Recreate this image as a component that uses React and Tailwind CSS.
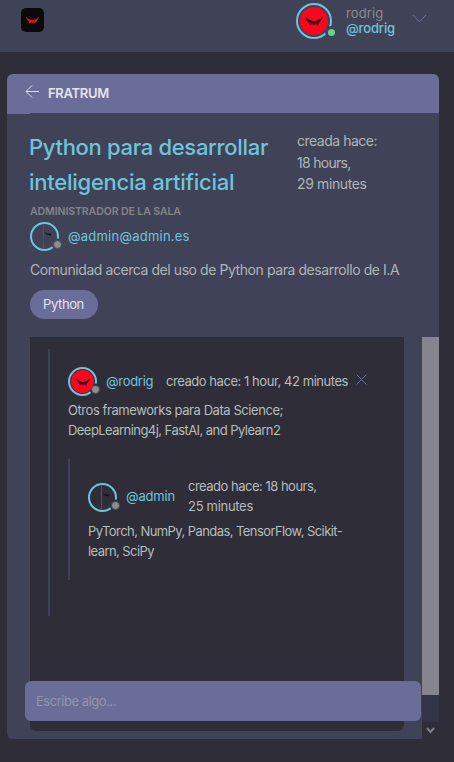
import { useId } from 'react';

const FONT = "font-['Inter','Open_Sans',sans-serif]";

function Wings({ className, dark }) {
  return (
    <svg viewBox="0 0 52 28" className={className}>
      <path
        d="M0 0 Q10 13 26 15 Q42 13 52 0 Q49 14 42 18 L38 28 L31 23 L26 27 L21 23 L14 28 L10 18 Q3 14 0 0Z"
        fill={dark ? '#7d0814' : '#e3101f'}
      />
      {dark && <path d="M0 0 Q10 12 26 15 Q42 12 52 0 Q47 17 26 21 Q5 17 0 0Z" fill="#24060a" />}
    </svg>
  );
}

function Ring({ size, stroke }) {
  const id = useId();
  const r = size / 2;
  return (
    <svg width={size} height={size} className="absolute inset-0">
      <mask id={id}>
        <rect width={size} height={size} fill="#fff" />
        <circle cx={size === 36 ? 35 : 27} cy={size === 36 ? 29 : 22} r={size === 36 ? 6 : 5.5} fill="#000" />
      </mask>
      <circle cx={r} cy={r} r={r - stroke / 2} fill="none" stroke="#6dc5dc" strokeWidth={stroke} mask={`url(#${id})`} />
    </svg>
  );
}

function UserAvatar({ large }) {
  return large ? (
    <div className="relative size-9 shrink-0">
      <Ring size={36} stroke={2} />
      <div className="absolute left-1 top-1 flex size-7 items-center justify-center rounded-full bg-[#fc051e]">
        <Wings dark className="h-[10px] w-[18px]" />
      </div>
      <span className="absolute left-8 top-[26px] size-[7px] rounded-full bg-[#5fd38b]" />
    </div>
  ) : (
    <div className="relative size-[29px] shrink-0">
      <Ring size={29} stroke={2} />
      <div className="absolute left-[3px] top-[3px] flex size-[23px] items-center justify-center rounded-full bg-[#fc051e]">
        <Wings dark className="h-[8px] w-[14px]" />
      </div>
      <span className="absolute left-[23px] top-[18px] size-[9px] rounded-full border border-[#404258] bg-[#8d8d8e]" />
    </div>
  );
}

function ClockAvatar() {
  return (
    <div className="relative size-[29px] shrink-0">
      <Ring size={29} stroke={2} />
      <svg viewBox="0 0 29 29" className="absolute inset-0 size-[29px]">
        <path d="M13.5 3V26" stroke="#94304a" strokeWidth="1" />
        <path d="M12.3 24.5l1.2 2.5 1.2-2.5zM12.8 10h1.4v1.6h-1.4z" fill="#b02a40" />
        <path d="M14 10.2l3.2 1.2 4 .4-.6 1.7-4-1z" fill="#101014" />
      </svg>
      <span className="absolute left-[23px] top-[18px] size-[9px] rounded-full border border-[#404258] bg-[#8d8d8e]" />
    </div>
  );
}

function Header() {
  return (
    <header className="flex h-[52px] items-start bg-[#404258]">
      <div className="ml-[21px] mt-2 flex h-6 w-[23px] items-center justify-center rounded-[5px] bg-[#0a0a0b]">
        <Wings className="h-2 w-[13px]" />
      </div>
      <div className="ml-[252px] mt-[3px]">
        <UserAvatar large />
      </div>
      <div className="ml-[14px] mt-[6px] w-[49px] whitespace-nowrap text-[13px] leading-[15px]">
        <div className="tracking-[0.1px] text-[#8b8a8e]">rodrig</div>
        <div className="font-medium tracking-[-0.15px] text-[#6dc5dc]">@rodrig</div>
      </div>
      <svg width="15" height="10" className="ml-[17px] mt-[14px]">
        <path d="M1 1l6.5 7L14 1" fill="none" stroke="#6b6d99" strokeWidth="1" />
      </svg>
    </header>
  );
}

function Comment() {
  return (
    <article className="ml-[18px] h-[267px] w-[330px] border-l-2 border-[#3e4157] pl-[18px] pt-[18px] text-[13px] leading-5 text-[#b5bdbf]">
      <div className="flex whitespace-nowrap">
        <UserAvatar />
        <span className="ml-[9px] mt-1 w-[60px] tracking-[-0.28px] text-[#6dc5dc]">@rodrig</span>
        <span className="mt-1 w-[182px] tracking-[-0.45px]">creado hace: 1 hour, 42 minutes</span>
        <svg width="11" height="11" className="ml-2 mt-[7px] shrink-0">
          <path d="M.5.5l10 10M10.5.5l-10 10" stroke="#6b6d99" />
        </svg>
      </div>
      <p className="mt-1 whitespace-nowrap">
        <span className="block tracking-[-0.43px]">Otros frameworks para Data Science;</span>
        <span className="block tracking-[-0.55px]">DeepLearning4j, FastAI, and Pylearn2</span>
      </p>
      <div className="mt-[19px] h-[121px] border-l-2 border-[#3e4157] pl-[18px] pt-[17px]">
        <div className="flex whitespace-nowrap">
          <div className="mt-[7px]">
            <ClockAvatar />
          </div>
          <span className="ml-[9px] mt-[10px] w-[62px] tracking-[-0.17px] text-[#6dc5dc]">@admin</span>
          <span>
            <span className="block tracking-[-0.5px]">creado hace: 18 hours,</span>
            <span className="block tracking-[-0.3px]">25 minutes</span>
          </span>
        </div>
        <p className="mt-[5px] whitespace-nowrap">
          <span className="block tracking-[-0.57px]">PyTorch, NumPy, Pandas, TensorFlow, Scikit-</span>
          <span className="block tracking-[-0.57px]">learn, SciPy</span>
        </p>
      </div>
    </article>
  );
}

export default function App() {
  return (
    <div className={`h-[762px] w-[454px] overflow-hidden bg-[#2e2d38] ${FONT}`}>
      <Header />
      <main className="relative ml-[7px] mt-[22px] h-[665px] w-[432px] overflow-hidden rounded-md bg-[#404258]">
        <div className="flex h-[39px] items-center bg-[#6b6d99] pl-[18px]">
          <svg width="14" height="13" className="-mt-1">
            <path d="M14 6.5H1M7 .5l-6 6 6 6" fill="none" stroke="#dcdce4" strokeWidth="1" />
          </svg>
          <h1 className="ml-[9px] text-[13px] font-semibold tracking-[-0.3px] text-[#e4e4ea]">FRATRUM</h1>
        </div>
        <div className="h-px w-[23px] bg-[#6b6d99]" />
        <section className="h-[223px] pl-[23px] pt-4">
          <div className="flex whitespace-nowrap">
            <h2 className="w-[267px] text-[22px] font-medium leading-[35px] text-[#6dc5dc]">
              <span className="-ml-px block tracking-[-0.32px]">Python para desarrollar</span>
              <span className="-ml-px block tracking-[-0.25px]">inteligencia artificial</span>
            </h2>
            <div className="text-[14px] leading-[21.5px] text-[#aeb5b9]">
              <div className="tracking-[-0.49px]">creada hace:</div>
              <div className="tracking-[-0.7px]">18 hours,</div>
              <div className="tracking-[-0.38px]">29 minutes</div>
            </div>
          </div>
          <div className="mt-1 text-[10.5px] font-semibold leading-4 tracking-[-0.08px] text-[#858587]">
            ADMINISTRADOR DE LA SALA
          </div>
          <div className="mt-[2px] flex items-center">
            <ClockAvatar />
            <span className="ml-[9px] text-[13px] tracking-[0.23px] text-[#6dc5dc]">@admin@admin.es</span>
          </div>
          <p className="mt-2 whitespace-nowrap text-[14px] leading-[21px] tracking-[-0.43px] text-[#aeb5b9]">
            Comunidad acerca del uso de Python para desarrollo de I.A
          </p>
          <span className="mt-[10px] flex h-[29px] w-[68px] items-center justify-center rounded-full bg-[#6b6d99] pr-px text-[13px] tracking-[-0.4px] text-[#e4e4ea]">
            Python
          </span>
        </section>
        <section className="flex h-[402px]">
          <div className="ml-[23px] h-[394px] w-[374px] rounded-b-md bg-[#2e2d38] pt-3">
            <Comment />
          </div>
          <div className="ml-[18px] flex w-[17px] flex-col bg-[#333447]">
            <div className="h-[358px] bg-[#86858f]" />
            <div className="mt-auto flex h-[17px] items-center justify-center bg-[#2e2d38]">
              <svg width="9" height="7">
                <path d="M1 1l3.5 4L8 1" fill="none" stroke="#7f7f88" strokeWidth="2" />
              </svg>
            </div>
          </div>
        </section>
        <input
          placeholder="Escribe algo..."
          className="absolute left-[18px] top-[607px] h-10 w-[396px] rounded-md bg-[#6b6d99] px-[11px] text-[13px] tracking-[-0.47px] outline-none placeholder:text-[#9294ae]"
        />
      </main>
    </div>
  );
}
